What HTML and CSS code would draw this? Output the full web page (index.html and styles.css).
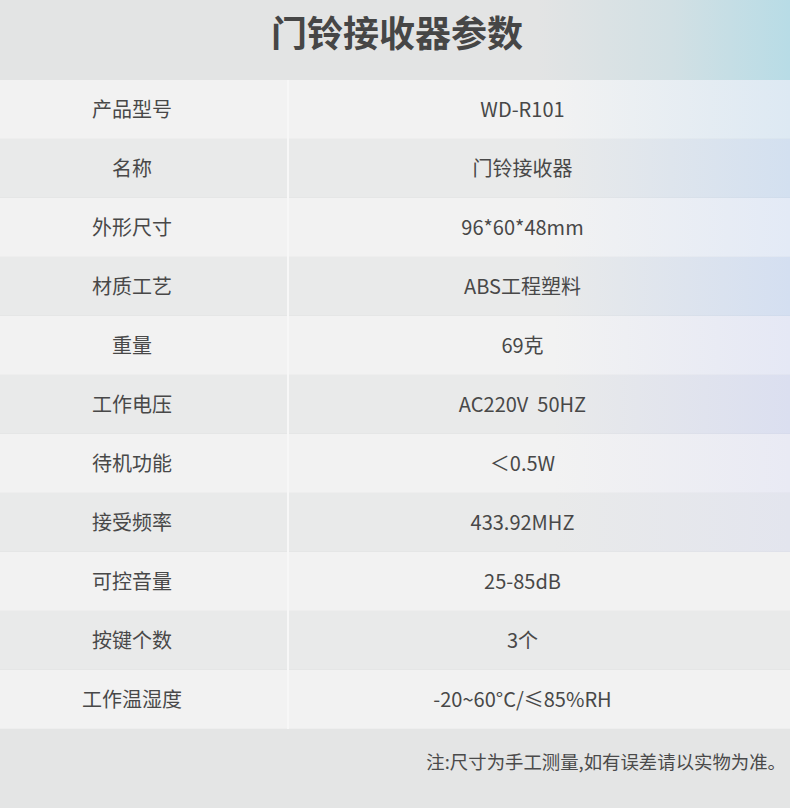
FILE: index.html
```html
<!DOCTYPE html>
<html lang="zh-CN">
<head>
<meta charset="utf-8">
<title>门铃接收器参数</title>
<link rel="stylesheet" href="styles.css">
</head>
<body>
<div class="page">
  <header class="title"><h1>门铃接收器参数</h1></header>
  <div class="table">
    <div class="row"><div class="key">产品型号</div><div class="val">WD-R101</div></div>
    <div class="row"><div class="key">名称</div><div class="val">门铃接收器</div></div>
    <div class="row"><div class="key">外形尺寸</div><div class="val">96*60*48mm</div></div>
    <div class="row"><div class="key">材质工艺</div><div class="val">ABS工程塑料</div></div>
    <div class="row"><div class="key">重量</div><div class="val">69克</div></div>
    <div class="row"><div class="key">工作电压</div><div class="val">AC220V&nbsp; 50HZ</div></div>
    <div class="row"><div class="key">待机功能</div><div class="val">＜0.5W</div></div>
    <div class="row"><div class="key">接受频率</div><div class="val">433.92MHZ</div></div>
    <div class="row"><div class="key">可控音量</div><div class="val">25-85dB</div></div>
    <div class="row"><div class="key">按键个数</div><div class="val">3个</div></div>
    <div class="row"><div class="key">工作温湿度</div><div class="val">-20~60°C/≤85%RH</div></div>
  </div>
  <footer class="note">注:尺寸为手工测量,如有误差请以实物为准。</footer>
</div>
</body>
</html>
```

FILE: styles.css
```css
* { box-sizing: border-box; }
html, body { margin: 0; padding: 0; }
body {
  background: #e4e5e5;
  font-family: "Noto Sans CJK SC", "Noto Sans", sans-serif;
  color: #484848;
}
.page {
  width: 790px;
  height: 808px;
  display: flex;
  flex-direction: column;
}
.title {
  height: 80px;
  display: flex;
  align-items: center;
  justify-content: center;
  padding-bottom: 19px;
  background: linear-gradient(to right, #e3e4e4 0%, #e3e4e4 68%, #d2e0e4 85%, #b8dce6 100%);
}
.title h1 {
  margin: 0;
  font-size: 36px;
  font-weight: 700;
  color: #464646;
  line-height: 1;
  transform: translateX(2px);
}
.table {
  display: flex;
  flex-direction: column;
}
.row {
  height: 59px;
  display: grid;
  grid-template-columns: 287px 1fr;
  font-size: 20px;
  --base: #f2f2f2;
  --tint: #f2f2f2;
  background: linear-gradient(to right, var(--base) 0%, var(--base) 70%, var(--tint) 100%);
  box-shadow: inset 0 -1px 0 rgba(0,0,0,0.015);
}
.row:nth-child(even) { --base: #e9eaea; --tint: #e9eaea; }
.row:nth-child(1) { --tint: #dde9f3; }
.row:nth-child(2) { --tint: #d3e0f0; }
.row:nth-child(3) { --tint: #e3eaf6; }
.row:nth-child(4) { --tint: #d4dff1; }
.row:nth-child(5) { --tint: #e5e8f5; }
.row:nth-child(6) { --tint: #dbdff0; }
.row:nth-child(7) { --tint: #e9eaf4; }
.row:nth-child(8) { --tint: #e3e5ee; }
.key, .val {
  display: flex;
  align-items: center;
  justify-content: center;
  padding-bottom: 3px;
}
.key {
  padding-right: 23px;
}
.val {
  border-left: 2px solid #f7f7f7;
  padding-right: 34px;
}
.note {
  flex: 1;
  display: flex;
  justify-content: flex-end;
  align-items: flex-start;
  padding-top: 19px;
  padding-right: 4px;
  font-size: 18.4px;
  color: #4a4a4a;
  background: #e4e5e5;
}
```
